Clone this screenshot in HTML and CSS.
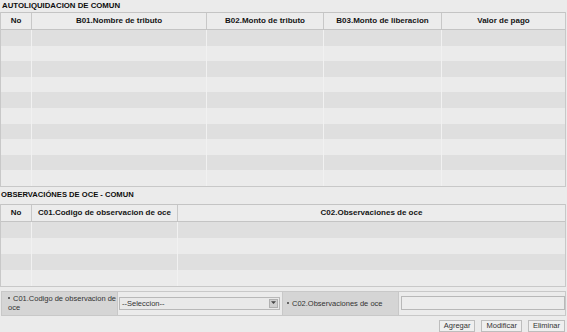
FILE: index.html
```html
<!DOCTYPE html>
<html>
<head>
<meta charset="utf-8">
<link rel="stylesheet" href="styles.css">
</head>
<body>
<div class="page">
  <div class="title t1">AUTOLIQUIDACION DE COMUN</div>
  <div class="grid g1">
    <div class="row head">
      <div class="c no">No</div>
      <div class="c b01">B01.Nombre de tributo</div>
      <div class="c b02">B02.Monto de tributo</div>
      <div class="c b03">B03.Monto de liberacion</div>
      <div class="c val">Valor de pago</div>
    </div>
    <div class="row odd"><div class="c no"></div><div class="c b01"></div><div class="c b02"></div><div class="c b03"></div><div class="c val"></div></div>
    <div class="row"><div class="c no"></div><div class="c b01"></div><div class="c b02"></div><div class="c b03"></div><div class="c val"></div></div>
    <div class="row odd"><div class="c no"></div><div class="c b01"></div><div class="c b02"></div><div class="c b03"></div><div class="c val"></div></div>
    <div class="row"><div class="c no"></div><div class="c b01"></div><div class="c b02"></div><div class="c b03"></div><div class="c val"></div></div>
    <div class="row odd"><div class="c no"></div><div class="c b01"></div><div class="c b02"></div><div class="c b03"></div><div class="c val"></div></div>
    <div class="row"><div class="c no"></div><div class="c b01"></div><div class="c b02"></div><div class="c b03"></div><div class="c val"></div></div>
    <div class="row odd"><div class="c no"></div><div class="c b01"></div><div class="c b02"></div><div class="c b03"></div><div class="c val"></div></div>
    <div class="row"><div class="c no"></div><div class="c b01"></div><div class="c b02"></div><div class="c b03"></div><div class="c val"></div></div>
    <div class="row odd"><div class="c no"></div><div class="c b01"></div><div class="c b02"></div><div class="c b03"></div><div class="c val"></div></div>
    <div class="row"><div class="c no"></div><div class="c b01"></div><div class="c b02"></div><div class="c b03"></div><div class="c val"></div></div>
  </div>

  <div class="title t2">OBSERVACIÓNES DE OCE - COMUN</div>
  <div class="grid g2">
    <div class="row head">
      <div class="c no">No</div>
      <div class="c c01">C01.Codigo de observacion de oce</div>
      <div class="c c02">C02.Observaciones de oce</div>
    </div>
    <div class="row odd r2"><div class="c no"></div><div class="c c01"></div><div class="c c02"></div></div>
    <div class="row r2"><div class="c no"></div><div class="c c01"></div><div class="c c02"></div></div>
    <div class="row odd r2"><div class="c no"></div><div class="c c01"></div><div class="c c02"></div></div>
    <div class="row r2"><div class="c no"></div><div class="c c01"></div><div class="c c02"></div></div>
  </div>

  <div class="form">
    <div class="label l1"><span class="dot"></span>C01.Codigo de observacion de oce</div>
    <div class="field f1">
      <div class="select"><span>--Seleccion--</span><span class="arrow"><svg width="7" height="5" viewBox="0 0 7 5"><path d="M0 0 H7 L3.5 4 Z" fill="#444"/></svg></span></div>
    </div>
    <div class="label l2"><span class="dot"></span>C02.Observaciones de oce</div>
    <div class="field f2"><div class="input"></div></div>
  </div>

  <div class="buttons">
    <button class="btn">Agregar</button>
    <button class="btn">Modificar</button>
    <button class="btn">Eliminar</button>
  </div>
  <div class="bottom"></div>
</div>
</body>
</html>
```

FILE: styles.css
```css
html, body {
  margin: 0;
  padding: 0;
  background: #ebebeb;
}
body {
  width: 567px;
  height: 332px;
  overflow: hidden;
  font-family: "Liberation Sans", Arial, sans-serif;
  color: #1a1a1a;
}
.page {
  display: flex;
  flex-direction: column;
  width: 567px;
}
.title {
  font-weight: bold;
  font-size: 7.8px;
  padding-left: 2px;
  color: #0d0d0d;
}
.t1 {
  height: 12px;
  line-height: 11px;
}
.t2 {
  height: 17px;
  line-height: 16px;
  padding-left: 1px;
  font-size: 7.6px;
}
.grid {
  width: 564px;
  border: 1px solid #c8c8c8;
  border-top: none;
  background: #ebebeb;
}
.row {
  display: flex;
  height: 15.6px;
}
.row.r2 { height: 16px; }
.row.odd { background: #dfdfdf; }
.row.head {
  height: 16px;
  background: #ececec;
  border-top: 1px solid #c4c4c4;
  border-bottom: 1px solid #c4c4c4;
  font-weight: bold;
  font-size: 8px;
  line-height: 16px;
  color: #141414;
}
.c {
  text-align: center;
  border-right: 1px solid #f1f1f1;
  box-sizing: border-box;
  white-space: nowrap;
  overflow: hidden;
}
.row.head .c { border-right: 1px solid #c8c8c8; }
.c:last-child, .row.head .c:last-child { border-right: none; }
.no { width: 31px; }
.b01 { width: 175px; }
.b02 { width: 117px; }
.b03 { width: 118px; }
.val { flex: 1; }
.c01 { width: 146px; }
.c02 { flex: 1; }

.form {
  margin-top: 4px;
  display: flex;
  width: 563px;
  height: 23px;
  border: 1px solid #c8c8c8;
  margin-left: 1px;
  background: #ebebeb;
  font-size: 7.5px;
  color: #333;
}
.label {
  background: #d5d5d5;
  box-sizing: border-box;
  line-height: 9px;
  border-right: 1px solid #c8c8c8;
}
.dot {
  display: inline-block;
  width: 2px;
  height: 2px;
  background: #666;
  margin-right: 3px;
  vertical-align: 2px;
}
.l1 {
  width: 116px;
  padding: 2px 1px 0 6px;
}
.l2 {
  width: 116px;
  display: flex;
  align-items: center;
  padding: 0 2px 0 4px;
}
.l2 .dot { margin-right: 3px; }
.field {
  display: flex;
  align-items: center;
  box-sizing: border-box;
  border-right: 1px solid #c8c8c8;
}
.f1 { width: 165px; padding: 0 2px 0 1px; }
.f2 { flex: 1; padding: 0 0 0 2px; border-right: none; }
.select {
  flex: 1;
  height: 11px;
  border: 1px solid #b8b8b8;
  background: #e9e9e9;
  display: flex;
  align-items: center;
  justify-content: space-between;
  padding-left: 2px;
  font-size: 7.5px;
  color: #333;
}
.arrow {
  width: 9px;
  height: 9px;
  margin-right: 1px;
  background: #cfcfcf;
  border: 1px solid #b0b0b0;
  box-sizing: border-box;
  display: flex;
  align-items: center;
  justify-content: center;
}
.arrow svg { width: 5px; height: 4px; }
.input {
  flex: 1;
  height: 12px;
  border: 1px solid #b8b8b8;
  background: #ececec;
}
.buttons {
  display: flex;
  justify-content: flex-end;
  gap: 6px;
  padding: 4px 2px 0 0;
  height: 12px;
}
.btn {
  font-family: "Liberation Sans", Arial, sans-serif;
  font-size: 7.5px;
  color: #333;
  background: #efefef;
  border: 1px solid #bdbdbd;
  height: 12px;
  padding: 0 4px;
  line-height: 10px;
  margin: 0;
}
.bottom {
  margin-top: 1px;
  height: 5px;
  background: #c4c4c4;
}
```
